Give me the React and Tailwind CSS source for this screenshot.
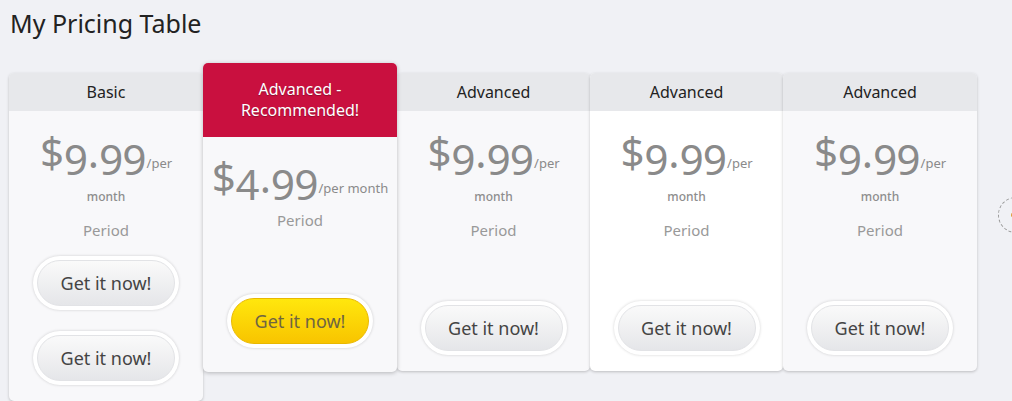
import React from "react";

function Btn({ yellow }) {
  return (
    <div className="rounded-full bg-white p-[4px] shadow-[0_0_3px_rgba(0,0,0,0.18)]">
      <div
        className={
          yellow
            ? "flex h-[46px] w-[138px] items-center justify-center rounded-full border border-[#e9b800] bg-linear-to-b from-[#ffe70d] to-[#f8c400] text-[18px] text-[#6f6542]"
            : "flex h-[46px] w-[138px] items-center justify-center rounded-full border border-[#e2e3e6] bg-linear-to-b from-[#fafafa] to-[#e5e6e9] text-[18px] text-[#444]"
        }
      >
        Get it now!
      </div>
    </div>
  );
}

function Price({ amount, inline }) {
  return (
    <div className="flex flex-col items-center text-[#8a8a8a]">
      <div className="flex items-baseline justify-center">
        <span className="text-[42px] leading-[50px] oldstyle-nums tracking-[0.5px]">{amount}</span>
        <span className="text-[13px] text-[#8a8a8a]">{inline ? "/per month" : "/per"}</span>
      </div>
      {!inline && <div className="mt-[10px] text-[12px] font-medium leading-[20px] text-[#8d8d8d]">month</div>}
    </div>
  );
}

function Card({ title, white, w, children, className }) {
  return (
    <div
      className={`flex flex-col overflow-hidden rounded-[5px] shadow-[0_1px_3px_rgba(0,0,0,0.22)] ${white ? "bg-white" : "bg-[#f8f8fa]"} ${className}`}
      style={{ width: w }}
    >
      <div className="flex h-[38px] shrink-0 items-center justify-center bg-[#e7e8eb] text-[16px] text-[#222]">{title}</div>
      {children}
    </div>
  );
}

export default function App() {
  return (
    <div
      className="relative h-[401px] w-[1012px] overflow-hidden bg-[#f0f1f5]"
      style={{ fontFamily: '"Noto Sans", "Open Sans", sans-serif' }}
    >
      <h1 className="pl-[10px] pt-[5px] text-[25px] leading-[36px] text-[#222]">My Pricing Table</h1>

      <div className="mt-[22px] flex items-start pl-[9px]">
        <Card title="Basic" w={194} className="mt-[10px] h-[328px]">
          <div className="flex flex-col items-center pt-[16px]">
            <Price amount="$9.99" />
            <div className="mt-[11px] text-[15px] leading-[24px] text-[#999]">Period</div>
            <div className="mt-[14px]">
              <Btn />
            </div>
            <div className="mt-[21px]">
              <Btn />
            </div>
          </div>
        </Card>

        <div className="relative z-10 flex h-[309px] w-[194px] flex-col overflow-hidden rounded-[5px] bg-[#f8f8fa] shadow-[0_1px_4px_rgba(0,0,0,0.25)]">
          <div className="flex h-[74px] shrink-0 flex-col items-center justify-center bg-[#c9103f] text-[16px] leading-[21px] text-white [text-shadow:0_1px_1px_rgba(0,0,0,0.3)]">
            <span>Advanced -</span>
            <span>Recommended!</span>
          </div>
          <div className="flex flex-1 flex-col items-center pt-[15px]">
            <Price amount="$4.99" inline />
            <div className="mt-[6px] text-[15px] leading-[24px] text-[#999]">Period</div>
            <div className="mt-[62px]">
              <Btn yellow />
            </div>
          </div>
        </div>

        {[false, true, false].map((white, i) => (
          <Card key={i} title="Advanced" white={white} w={i === 2 ? 194 : 193} className="mt-[10px] h-[298px]">
            <div className="flex flex-1 flex-col items-center pb-[16px] pt-[16px]">
              <Price amount="$9.99" />
              <div className="mt-[11px] text-[15px] leading-[24px] text-[#999]">Period</div>
              <div className="mt-auto">
                <Btn />
              </div>
            </div>
          </Card>
        ))}
      </div>

      <div className="absolute left-[998px] top-[197px] flex h-[36px] w-[36px] items-center rounded-full border border-dashed border-[#9a9a9a] pl-[12px]">
        <span className="h-[4px] w-[3px] rounded-sm bg-[#e0a040]" />
      </div>
    </div>
  );
}
